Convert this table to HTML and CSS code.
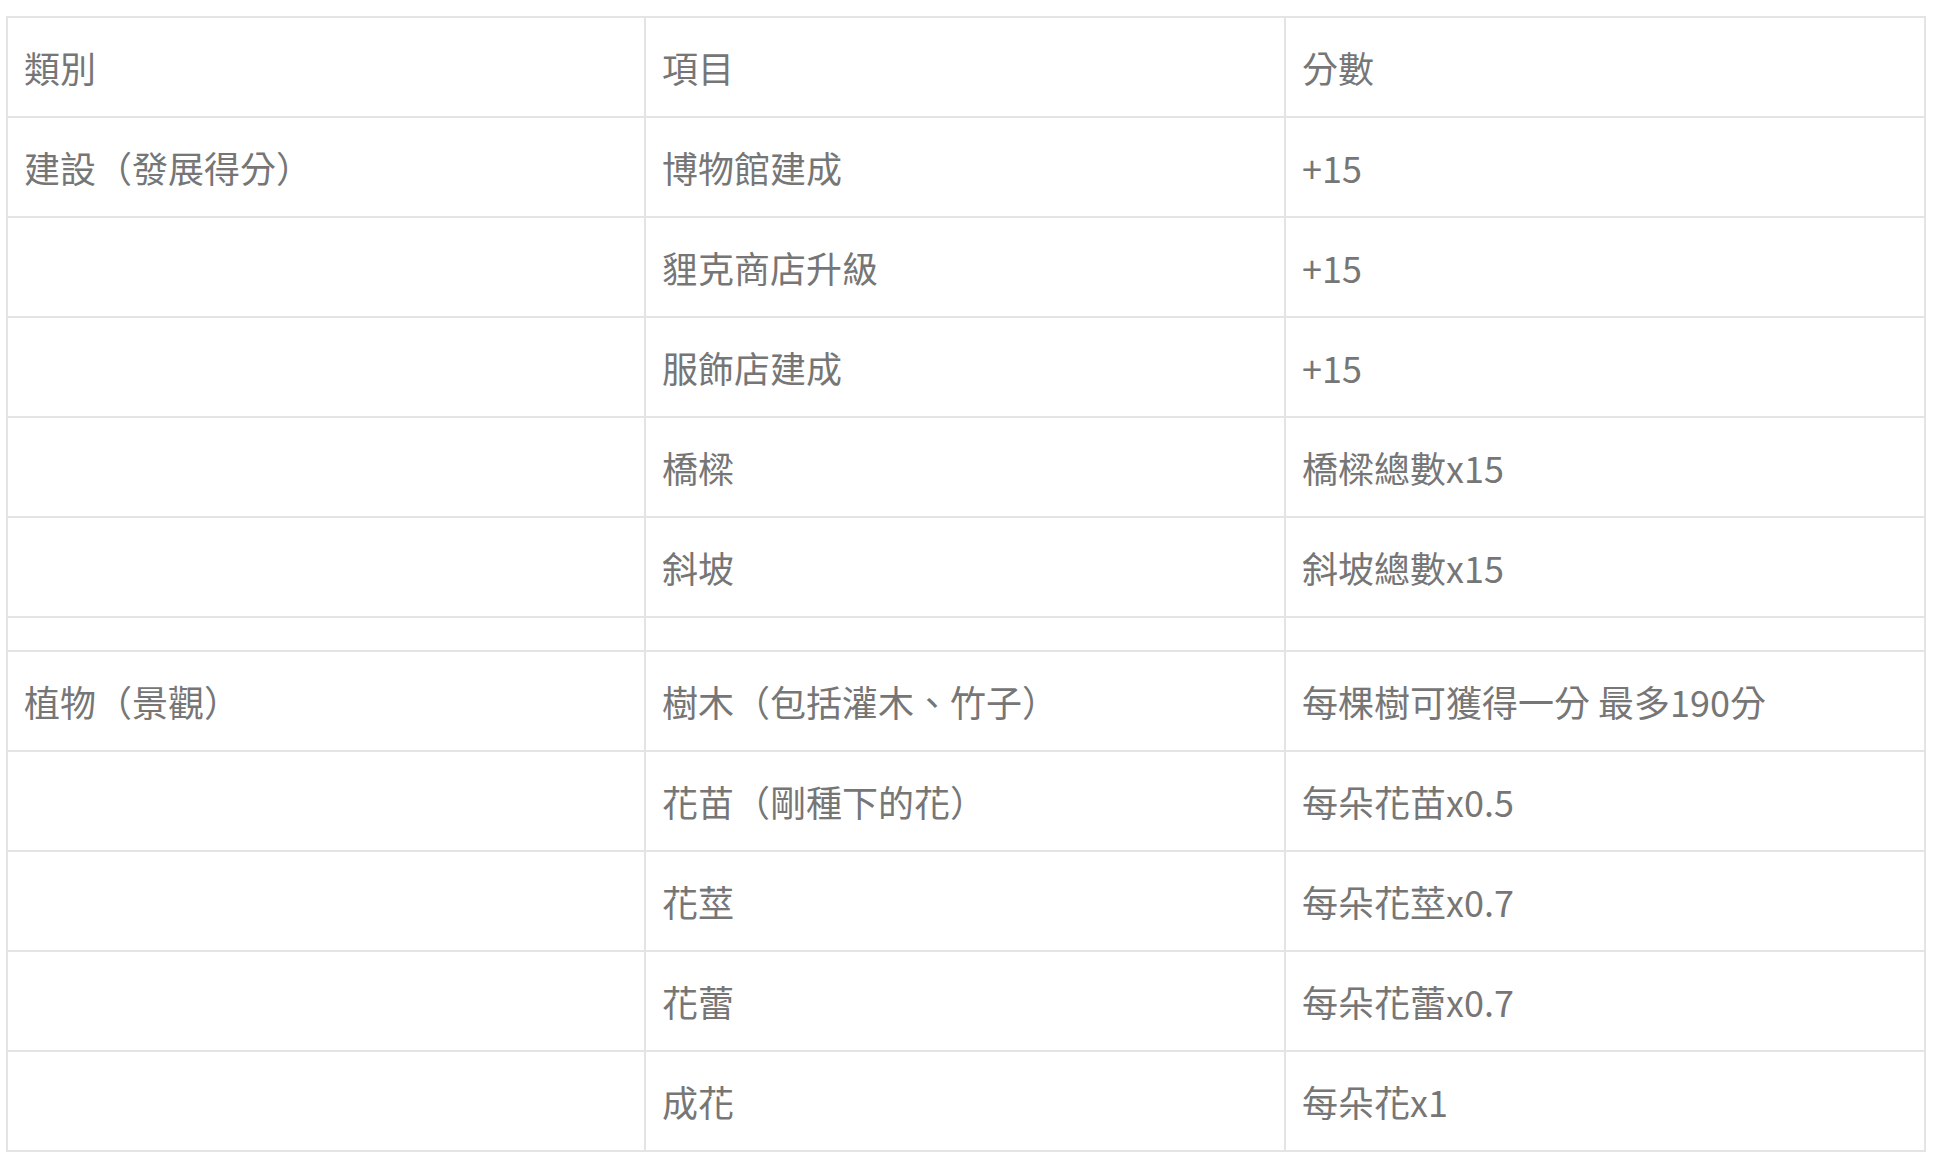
FILE: index.html
```html
<!DOCTYPE html>
<html lang="zh-Hant">
<head>
<meta charset="utf-8">
<title>得分表</title>
<link rel="stylesheet" href="styles.css">
</head>
<body>
<div class="wrap">
<table class="score">
<colgroup><col class="c1"><col class="c2"><col class="c3"></colgroup>
<thead>
<tr><td>類別</td><td>項目</td><td>分數</td></tr>
</thead>
<tbody>
<tr><td>建設（發展得分）</td><td>博物館建成</td><td>+15</td></tr>
<tr><td></td><td>貍克商店升級</td><td>+15</td></tr>
<tr><td></td><td>服飾店建成</td><td>+15</td></tr>
<tr><td></td><td>橋樑</td><td>橋樑總數x15</td></tr>
<tr><td></td><td>斜坡</td><td>斜坡總數x15</td></tr>
<tr class="blank"><td></td><td></td><td></td></tr>
<tr><td>植物（景觀）</td><td>樹木（包括灌木、竹子）</td><td>每棵樹可獲得一分 最多190分</td></tr>
<tr><td></td><td>花苗（剛種下的花）</td><td>每朵花苗x0.5</td></tr>
<tr><td></td><td>花莖</td><td>每朵花莖x0.7</td></tr>
<tr><td></td><td>花蕾</td><td>每朵花蕾x0.7</td></tr>
<tr><td></td><td>成花</td><td>每朵花x1</td></tr>
</tbody>
</table>
</div>
</body>
</html>
```
FILE: styles.css
```css
html, body {
  margin: 0;
  padding: 0;
  background: #ffffff;
}
.wrap {
  padding: 16px 10px 0 6px;
}
.score {
  width: 1920px;
  table-layout: fixed;
  border-collapse: separate;
  border-spacing: 0;
  border-top: 2px solid #e4e4e4;
  border-left: 2px solid #e4e4e4;
  font-family: "Noto Sans CJK TC", "Noto Sans", sans-serif;
  font-size: 36px;
  font-weight: 400;
  color: #767676;
}
.c1 { width: 638px; }
.c2 { width: 640px; }
.c3 { width: 640px; }
.score td {
  box-sizing: border-box;
  border-right: 2px solid #e4e4e4;
  border-bottom: 2px solid #e4e4e4;
  padding: 16px;
  height: 100px;
  line-height: 66px;
  vertical-align: middle;
  white-space: nowrap;
  text-align: left;
}
.score tr.blank td {
  height: 34px;
  line-height: 0;
  padding: 16px;
}
```
